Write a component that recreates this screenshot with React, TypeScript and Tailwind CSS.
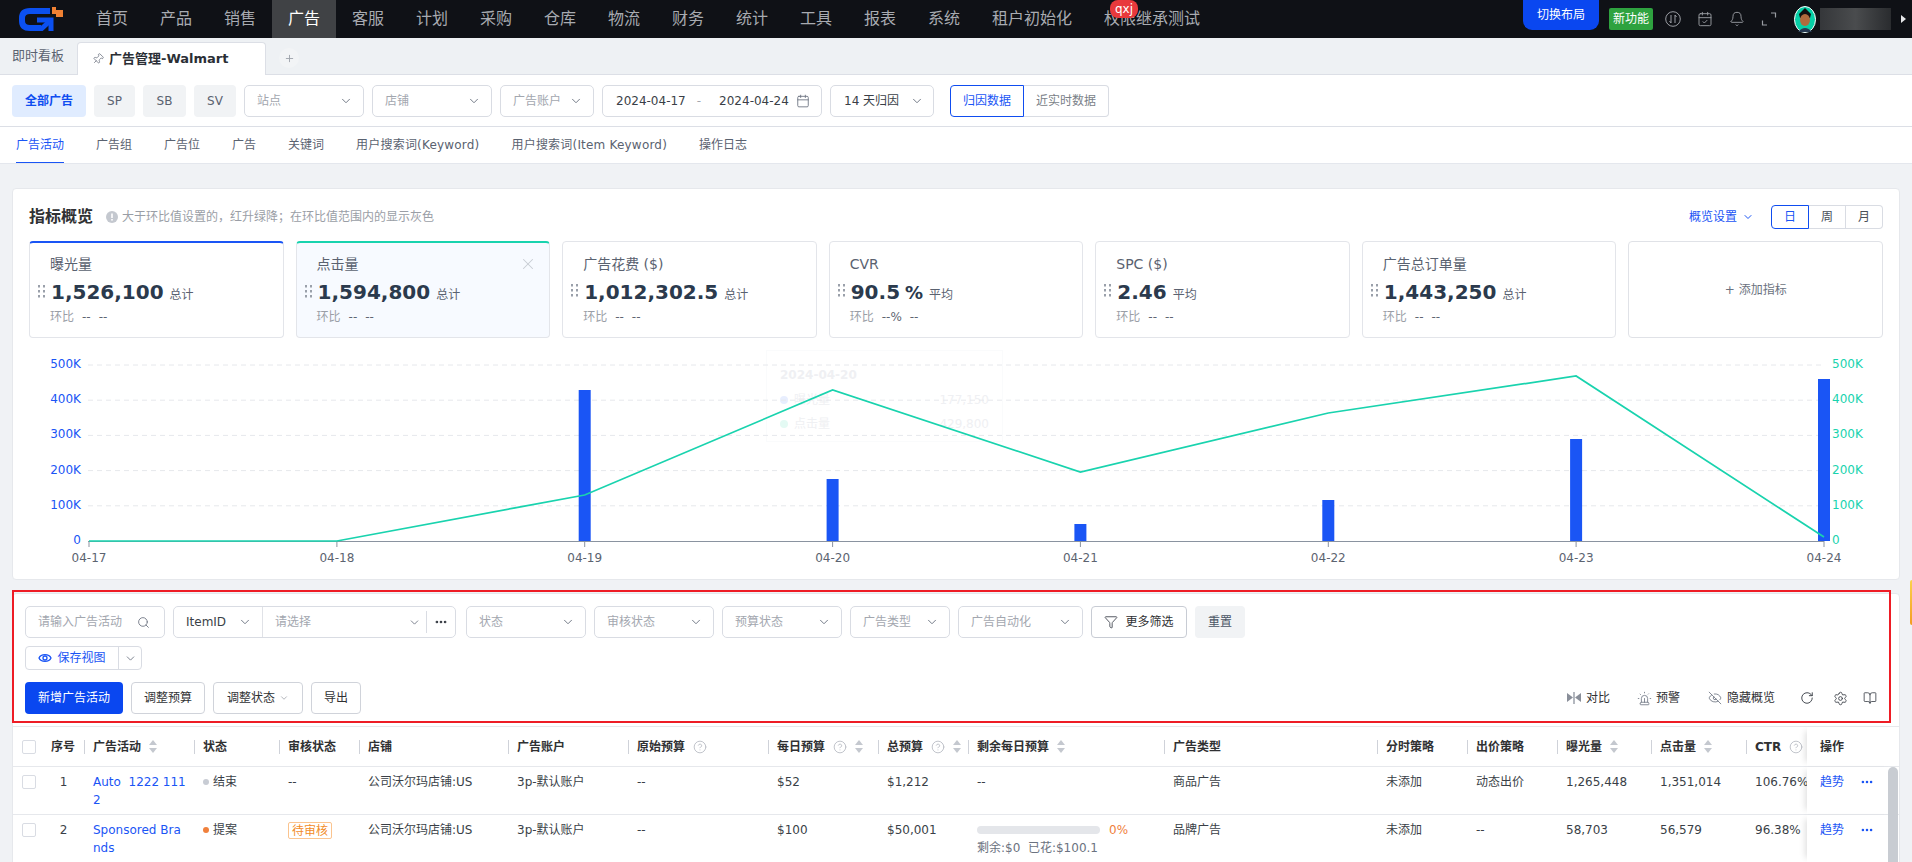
import React from "react";
import { ChevronDown, Search, Calendar, Funnel, Pin, Bell, CalendarCheck, Siren, EyeOff, RotateCw, Settings, BookOpen, CircleHelp, Plus, X, Ellipsis } from "lucide-react";

const navItems = ["首页", "产品", "销售", "广告", "客服", "计划", "采购", "仓库", "物流", "财务", "统计", "工具", "报表", "系统"];

function Logo() {
  return (
    <svg width="44" height="24" viewBox="0 0 44 24" className="block">
      <path d="M31 4 H11 Q3 4 3 11 V14 Q3 21 11 21 H22" fill="none" stroke="#0b50f0" strokeWidth="6" />
      <path d="M18 13 H32 V24" fill="none" stroke="#0b50f0" strokeWidth="5" />
      <path d="M32 13 L20 24" fill="none" stroke="#0b50f0" strokeWidth="5" />
      <path d="M33 0 H37 V3 H44 V10 H37 V7 H33 Z" fill="#f08133" />
    </svg>
  );
}

function Avatar() {
  return (
    <svg width="22" height="27" viewBox="0 0 22 27" className="block">
      <ellipse cx="11" cy="13.500" rx="10.500" ry="13" fill="#06cfa6" stroke="#fff" strokeWidth="1" />
      <path d="M5 8 L11 2 L17 8 L16 12 H6 Z" fill="#111" />
      <ellipse cx="11" cy="14" rx="5" ry="6" fill="#b06a3c" />
      <path d="M4 26 Q11 18 18 26 Z" fill="#273a52" />
    </svg>
  );
}

function Sel({ label, w }: { label: string; w: string }) {
  return (
    <div className={`flex h-8 shrink-0 items-center justify-between rounded-[5px] border border-[#d9dce3] bg-white pl-3 pr-[10px] text-xs text-[#a3a7af] ${w}`}>
      <span>{label}</span>
      <ChevronDown size={14} className="text-[#6b7280]" strokeWidth={1.6} />
    </div>
  );
}

function Sort() {
  return (
    <svg width="8" height="13" viewBox="0 0 8 13" className="ml-2 shrink-0">
      <path d="M4 0 L8 5 H0 Z" fill="#c4c8cf" />
      <path d="M0 8 H8 L4 13 Z" fill="#c4c8cf" />
    </svg>
  );
}

function Help() {
  return <CircleHelp size={14} className="ml-2 shrink-0 text-[#b8bcc4]" strokeWidth={1.5} />;
}

function Kpi({ label, value, suffix, unit, ratio = "--", accent, active }: { label: string; value: string; suffix?: string; unit: string; ratio?: string; accent?: string; active?: boolean }) {
  return (
    <div className={`relative h-[97px] rounded-[4px] border border-[#e3e5ea] pl-5 ${accent ? "pt-[11px]" : "pt-3"} ${active ? "bg-[#f7faff]" : "bg-white"} ${accent ?? ""}`}>
      <div className="text-sm leading-5 text-[#5a6270]">{label}</div>
      <svg width="7" height="13" viewBox="0 0 7 13" className="absolute left-2 top-[42px]">
        {[0, 5, 10].map((y) => (
          <g key={y} fill="#9aa0aa">
            <rect x="0" y={y} width="2" height="2.500" />
            <rect x="5" y={y} width="2" height="2.500" />
          </g>
        ))}
      </svg>
      {active && <X size={18} className="absolute right-[12px] top-[12px] text-[#c8ccd4]" strokeWidth={1.4} />}
      <div className="mt-1 flex h-7 items-baseline pl-px">
        <span className="text-xl font-bold leading-7 text-[#2b3a4d]">{value}</span>
        {suffix && <span className="ml-[5px] text-lg font-bold leading-7 text-[#2b3a4d]">{suffix}</span>}
        <span className="ml-[6px] text-xs text-[#5a6270]">{unit}</span>
      </div>
      <div className="mt-[3px] flex gap-2 text-xs leading-4">
        <span className="text-[#9a9ea6]">环比</span>
        <span className="text-[#606672]">{ratio}</span>
        <span className="text-[#606672]">--</span>
      </div>
    </div>
  );
}

function Chart() {
  const xs = [89, 336.9, 584.7, 832.6, 1080.4, 1328.3, 1576.1, 1824];
  const labels = ["04-17", "04-18", "04-19", "04-20", "04-21", "04-22", "04-23", "04-24"];
  const ticks = ["500K", "400K", "300K", "200K", "100K", "0"];
  const gridY = [365, 400.2, 435.4, 470.6, 505.8];
  const bars = [[2, 390], [3, 479], [4, 524], [5, 500], [6, 439], [7, 379]];
  const line = [541, 541, 495, 390, 472, 413, 376, 537];
  return (
    <div className="relative mt-[2px] h-[238px]">
      <div className="absolute left-[737px] top-[10px] h-[92px] w-[237px] border border-[#fafbfc] px-[13px] pt-4 text-xs text-[#eff0f3]">
        <div className="font-bold leading-4">2024-04-20</div>
        <div className="mt-[9px] flex items-center justify-between">
          <span className="flex items-center gap-[6px]"><i className="h-2 w-2 rounded-full bg-[#e8eefe]" />曝光量</span>
          <span>177,150</span>
        </div>
        <div className="mt-2 flex items-center justify-between">
          <span className="flex items-center gap-[6px]"><i className="h-2 w-2 rounded-full bg-[#e4faf4]" />点击量</span>
          <span>429,800</span>
        </div>
      </div>
      <svg viewBox="29 340 1854 238" width="1854" height="238" className="relative block" fontSize="12">
        {gridY.map((y) => (
          <line key={y} x1="88" x2="1824" y1={y} y2={y} stroke="#e6e8ec" strokeDasharray="5 4" />
        ))}
        <line x1="88" x2="1824" y1="541.500" y2="541.500" stroke="#8a93a0" />
        {xs.map((x) => (
          <line key={x} x1={x} x2={x} y1="541" y2="547" stroke="#8a93a0" />
        ))}
        {ticks.map((t, i) => (
          <g key={t}>
            <text x="81" y={368 + i * 35.2} textAnchor="end" fill="#1a55f5">{t}</text>
            <text x="1832" y={368 + i * 35.2} fill="#19d3ae">{t}</text>
          </g>
        ))}
        {labels.map((l, i) => (
          <text key={l} x={xs[i]} y="562" textAnchor="middle" fill="#5c6370">{l}</text>
        ))}
        {bars.map(([i, y]) => (
          <rect key={i} x={xs[i] - 6} y={y} width="12" height={541 - y} fill="#1a55f5" />
        ))}
        <polyline points={xs.map((x, i) => `${x},${line[i]}`).join(" ")} fill="none" stroke="#19d3ae" strokeWidth="1.700" />
      </svg>
    </div>
  );
}

function CompareIcon() {
  return (
    <svg width="14" height="12" viewBox="0 0 14 12" fill="#6b7280">
      <path d="M0 1 L6 5.500 L0 10 Z" fillOpacity="0.8" />
      <path d="M14 1 L8 5.500 L14 10 Z" fillOpacity="0.8" />
      <rect x="6.500" y="0" width="1" height="12" />
    </svg>
  );
}

function Th({ children, pad = "pl-2", last }: { children?: React.ReactNode; pad?: string; last?: boolean }) {
  return (
    <div className={`flex h-full items-center overflow-hidden whitespace-nowrap text-xs font-bold text-[#303133] ${pad}`}>
      {children}
      {!last && <span className="ml-auto h-[14px] w-px shrink-0 bg-[#cfd2d9]" />}
    </div>
  );
}

function Td({ children, pad = "pl-2" }: { children?: React.ReactNode; pad?: string }) {
  return <div className={`overflow-hidden whitespace-nowrap pt-[6px] text-xs leading-[18px] text-[#3a3f47] ${pad}`}>{children}</div>;
}

const cols = "grid grid-cols-[31px_41px_110px_85px_80px_149px_120px_140px_110px_90px_196px_213px_90px_90px_94px_95px_60px_90px]";

function Cb() {
  return <span className="mt-[2px] block h-[14px] w-[14px] rounded-[2px] border border-[#d9dce3] bg-white" />;
}

function OpCell() {
  return (
    <div className="relative flex items-start bg-white pl-[13px] pt-[6px] text-xs leading-[18px] text-[#1a55f5] shadow-[-6px_0_6px_-4px_rgba(0,0,0,0.12)]">
      <span>趋势</span>
      <Ellipsis size={14} className="ml-[16px] mt-[2px]" strokeWidth={2.4} />
    </div>
  );
}

function Row({ n, name, dot, status, audit, account = "3p-默认账户", daily, total, rest, type, bid, imp, clk, ctr }: any) {
  return (
    <div className={`${cols} h-12 border-t border-[#e6e8ec]`}>
      <Td pad="pl-[9px]"><Cb /></Td>
      <div className="pr-[2px] pt-[6px] text-center text-xs leading-[18px] text-[#3a3f47]">{n}</div>
      <Td><span className="whitespace-pre text-[#1a55f5]">{name}</span></Td>
      <Td>
        <span className="flex items-center gap-1">
          <i className={`h-[6px] w-[6px] rounded-full ${dot}`} />
          {status}
        </span>
      </Td>
      <Td>{audit}</Td>
      <Td>公司沃尔玛店铺:US</Td>
      <Td>{account}</Td>
      <Td>--</Td>
      <Td>{daily}</Td>
      <Td>{total}</Td>
      <Td>{rest}</Td>
      <Td>{type}</Td>
      <Td>未添加</Td>
      <Td>{bid}</Td>
      <Td>{imp}</Td>
      <Td>{clk}</Td>
      <Td>{ctr}</Td>
      <OpCell />
    </div>
  );
}

export default function App() {
  return (
    <div className="relative h-[862px] w-[1912px] overflow-hidden bg-[#f0f2f5] text-xs text-[#303133] [font-family:'DejaVu_Sans','Noto_Sans_CJK_SC',sans-serif]">
      {/* top nav */}
      <header className="flex h-[38px] items-center bg-[#0f1116] text-base text-[#a8abb1]">
        <div className="flex h-full w-20 shrink-0 items-center pl-[19px]"><Logo /></div>
        {navItems.map((t) => (
          <div key={t} className={`flex h-full w-16 shrink-0 items-center justify-center ${t === "广告" ? "bg-[#404245] text-white" : ""}`}>{t}</div>
        ))}
        <div className="shrink-0 px-4">租户初始化</div>
        <div className="relative shrink-0 px-4">
          权限继承测试
          <span className="absolute -top-[7px] left-[22px] flex h-[18px] w-[28px] items-center justify-center rounded-[8px] bg-[#e8393c] text-xs leading-none text-white">qxj</span>
        </div>
        <div className="ml-auto flex h-full items-center pr-[6px]">
          <div className="flex h-[30px] w-[76px] items-center justify-center self-start rounded-b-[9px] bg-[#0a47f0] text-xs text-white">切换布局</div>
          <div className="ml-[10px] flex h-[22px] w-11 items-center justify-center rounded-[2px] bg-[#2ea23f] text-xs text-white">新功能</div>
          <svg width="16" height="16" viewBox="0 0 16 16" fill="none" stroke="#9a9da3" className="ml-3">
            <circle cx="8" cy="8" r="7.300" />
            <path d="M6 4 V12 M6 12 L4.500 10 M10 12 V4 M10 4 L11.500 6" />
          </svg>
          <CalendarCheck size={16} className="ml-4 text-[#9a9da3]" strokeWidth={1.4} />
          <Bell size={16} className="ml-4 text-[#9a9da3]" strokeWidth={1.4} />
          <svg width="16" height="16" viewBox="0 0 16 16" fill="none" stroke="#9a9da3" strokeWidth="1.200" className="ml-4">
            <path d="M10 2 H14.500 V6.500 M1.500 9.500 V14 H6" />
          </svg>
          <div className="ml-[17px]"><Avatar /></div>
          <div className="ml-1 h-[22px] w-[71px] bg-gradient-to-r from-[#35373a] via-[#4a4c4e] to-[#2a2c2f]" />
          <svg width="5" height="8" viewBox="0 0 5 8" className="ml-[10px]"><path d="M0 0 L5 4 L0 8 Z" fill="#e6e7e9" /></svg>
        </div>
      </header>

      {/* page tabs */}
      <div className="flex h-[37px] items-end border-b border-[#dcdfe6] bg-[#eef1f4]">
        <div className="flex h-full w-[77px] shrink-0 items-center pl-3 text-[13px] text-[#5a6270]">即时看板</div>
        <div className="-mb-px flex h-[33px] w-[189px] shrink-0 items-center gap-[5px] rounded-t-[4px] border border-b-0 border-[#dcdfe6] bg-white pl-[14px] text-[13px] font-bold text-[#2b2f36]">
          <Pin size={12} className="rotate-45 text-[#6b7280]" strokeWidth={1.5} />
          广告管理-Walmart
        </div>
        <div className="mb-[6px] ml-[13px] flex h-5 w-5 items-center justify-center rounded-full bg-[#f2f4f6] text-[#9ea3ab]"><Plus size={11} /></div>
      </div>

      {/* filter bar */}
      <div className="flex h-[52px] items-start gap-2 border-b border-[#dcdfe6] bg-white px-3 pt-[10px]">
        <div className="flex h-8 w-[74px] items-center justify-center rounded-[4px] bg-[#e0ecff] font-bold text-[#0f4df0]">全部广告</div>
        <div className="flex h-8 w-[41px] items-center justify-center rounded-[4px] bg-[#f1f3f5] text-[#5a6270]">SP</div>
        <div className="flex h-8 w-[43px] items-center justify-center rounded-[4px] bg-[#f1f3f5] text-[#5a6270]">SB</div>
        <div className="flex h-8 w-[42px] items-center justify-center rounded-[4px] bg-[#f1f3f5] text-[#5a6270]">SV</div>
        <Sel label="站点" w="w-[120px]" />
        <Sel label="店铺" w="w-[120px]" />
        <Sel label="广告账户" w="w-[94px]" />
        <div className="flex h-8 w-[220px] shrink-0 items-center rounded-[5px] border border-[#d9dce3] pl-[13px] text-[#3a3f47]">
          <span>2024-04-17</span>
          <span className="ml-[11px] text-[#a3a7af]">-</span>
          <span className="ml-[18px]">2024-04-24</span>
          <Calendar size={14} className="ml-[7px] text-[#6b7280]" strokeWidth={1.5} />
        </div>
        <div className="flex h-8 w-[104px] shrink-0 items-center justify-between rounded-[5px] border border-[#d9dce3] pl-[13px] pr-[9px] text-[#3a3f47]">
          <span>14 天归因</span>
          <ChevronDown size={14} className="text-[#6b7280]" strokeWidth={1.6} />
        </div>
        <div className="ml-2 flex h-8">
          <div className="flex w-[74px] items-center justify-center rounded-l-[4px] border border-[#0f4df0] text-[#1a55f5]">归因数据</div>
          <div className="flex w-[85px] items-center justify-center rounded-r-[4px] border border-l-0 border-[#d9dce3] text-[#7a7f88]">近实时数据</div>
        </div>
      </div>

      {/* sub tabs */}
      <div className="flex h-[37px] items-stretch gap-8 border-b border-[#e4e7ed] bg-white pl-4 text-[#5a6270]">
        <div className="flex items-center border-b border-[#1a55f5] text-[#1a55f5]">广告活动</div>
        <div className="flex items-center">广告组</div>
        <div className="flex items-center">广告位</div>
        <div className="flex items-center">广告</div>
        <div className="flex items-center">关键词</div>
        <div className="flex items-center tracking-[0.2px]">用户搜索词(Keyword)</div>
        <div className="flex items-center tracking-[0.2px]">用户搜索词(Item Keyword)</div>
        <div className="flex items-center">操作日志</div>
      </div>

      {/* overview */}
      <main className="px-3 pt-6">
        <section className="h-[392px] rounded-[4px] border border-[#e6e8ec] bg-white px-4 pt-4">
          <div className="flex h-6 items-center">
            <h2 className="text-base font-bold text-[#303133]">指标概览</h2>
            <svg width="12" height="12" viewBox="0 0 12 12" className="ml-[13px]">
              <circle cx="6" cy="6" r="6" fill="#c4c8cf" />
              <rect x="5.200" y="2.500" width="1.600" height="4.500" fill="#fff" />
              <rect x="5.200" y="8" width="1.600" height="1.600" fill="#fff" />
            </svg>
            <span className="ml-1 text-xs text-[#9a9ea6]">大于环比值设置的，红升绿降；在环比值范围内的显示灰色</span>
            <span className="ml-auto text-xs text-[#1a55f5]">概览设置</span>
            <ChevronDown size={12} className="ml-[5px] text-[#1a55f5]" strokeWidth={2} />
            <div className="ml-[17px] flex h-6 w-[112px] text-xs text-[#4a4f58]">
              <div className="flex w-[38px] items-center justify-center rounded-l-[4px] border border-[#0f4df0] text-[#1a55f5]">日</div>
              <div className="flex w-[37px] items-center justify-center border-y border-r border-[#d9dce3]">周</div>
              <div className="flex w-[37px] items-center justify-center rounded-r-[4px] border-y border-r border-[#d9dce3]">月</div>
            </div>
          </div>
          <div className="mt-3 grid grid-cols-7 gap-3">
            <Kpi label="曝光量" value="1,526,100" unit="总计" accent="border-t-2 border-t-[#1a55f5]" />
            <Kpi label="点击量" value="1,594,800" unit="总计" active accent="border-t-2 border-t-[#19d3ae]" />
            <Kpi label="广告花费 ($)" value="1,012,302.5" unit="总计" />
            <Kpi label="CVR" value="90.5" suffix="%" unit="平均" ratio="--%" />
            <Kpi label="SPC ($)" value="2.46" unit="平均" />
            <Kpi label="广告总订单量" value="1,443,250" unit="总计" />
            <div className="flex h-[97px] items-center justify-center rounded-[4px] border border-[#e0e2e7] text-xs text-[#6b7280]">+ 添加指标</div>
          </div>
          <Chart />
        </section>

        {/* campaign table card */}
        <section className="relative mt-[13px] h-[300px] overflow-hidden rounded-t-[4px] border border-[#e6e8ec] bg-white pt-3">
          <div className="flex gap-2 pl-3">
            <div className="flex h-8 w-[140px] items-center justify-between rounded-[5px] border border-[#d9dce3] pl-[12px] pr-[14px] text-[#a3a7af]">
              <span>请输入广告活动</span>
              <Search size={13} className="text-[#6b7280]" strokeWidth={1.6} />
            </div>
            <div className="flex h-8 w-[283px] items-center rounded-[5px] border border-[#d9dce3]">
              <div className="flex h-full w-[89px] items-center justify-between border-r border-[#e0e2e7] pl-[12px] pr-[10px] text-[#3a3f47]">
                <span>ItemID</span>
                <ChevronDown size={14} className="text-[#6b7280]" strokeWidth={1.6} />
              </div>
              <span className="ml-3 text-[#a3a7af]">请选择</span>
              <ChevronDown size={13} className="ml-auto text-[#6b7280]" strokeWidth={1.6} />
              <span className="ml-[5px] h-[22px] w-px bg-[#d9dce3]" />
              <Ellipsis size={14} className="mx-[7px] text-[#3a3f47]" strokeWidth={2.6} />
            </div>
            <div className="ml-[2px] flex gap-2">
              <Sel label="状态" w="w-[120px]" />
              <Sel label="审核状态" w="w-[120px]" />
              <Sel label="预算状态" w="w-[120px]" />
              <Sel label="广告类型" w="w-[100px]" />
              <Sel label="广告自动化" w="w-[125px]" />
              <div className="flex h-8 w-[96px] items-center justify-center gap-[7px] rounded-[4px] border border-[#c8ccd4] text-[#303133]">
                <Funnel size={14} className="text-[#4a4f58]" strokeWidth={1.6} />
                更多筛选
              </div>
              <div className="flex h-8 w-[50px] items-center justify-center rounded-[4px] bg-[#f1f3f5] text-[#4a5564]">重置</div>
            </div>
          </div>
          <div className="ml-3 mt-2 flex h-6 w-[117px] items-center rounded-[4px] border border-[#d9dce3] text-[#1a55f5]">
            <div className="flex h-full w-[93px] items-center justify-center gap-[5px] border-r border-[#d9dce3]">
              <svg width="14" height="12" viewBox="0 0 14 12" fill="none" stroke="#1a55f5" strokeWidth="1.300">
                <path d="M1 6 C3 1.500 11 1.500 13 6 C11 10.500 3 10.500 1 6 Z" />
                <circle cx="7" cy="6" r="2" />
              </svg>
              保存视图
            </div>
            <ChevronDown size={13} className="ml-[5px] text-[#6b7280]" strokeWidth={1.6} />
          </div>
          <div className="mt-3 flex h-8 items-center gap-2 pl-3 pr-[22px]">
            <div className="flex h-8 w-[98px] items-center justify-center rounded-[4px] bg-[#0a47f0] text-white">新增广告活动</div>
            <div className="flex h-8 w-[74px] items-center justify-center rounded-[4px] border border-[#d0d3da]">调整预算</div>
            <div className="flex h-8 w-[90px] items-center justify-center gap-1 rounded-[4px] border border-[#d0d3da]">
              调整状态
              <ChevronDown size={10} className="text-[#a3a7af]" />
            </div>
            <div className="flex h-8 w-[50px] items-center justify-center rounded-[4px] border border-[#d0d3da]">导出</div>
            <div className="ml-auto flex items-center gap-[5px]"><CompareIcon />对比</div>
            <div className="ml-[19px] flex items-center gap-[4px]"><Siren size={15} className="text-[#6b7280]" strokeWidth={1.3} />预警</div>
            <div className="ml-[20px] flex items-center gap-[5px]"><EyeOff size={14} className="text-[#6b7280]" strokeWidth={1.4} />隐藏概览</div>
            <RotateCw size={14} className="ml-[17px] text-[#3a3f47]" strokeWidth={1.6} />
            <Settings size={15} className="ml-[11px] text-[#3a3f47]" strokeWidth={1.4} />
            <BookOpen size={14} className="ml-[7px] text-[#3a3f47]" strokeWidth={1.4} />
          </div>

          <div className="mt-3 border-t border-[#e6e8ec]">
            <div className={`${cols} h-[39px]`}>
              <div className="flex h-full items-center pl-[9px]"><span className="block h-[14px] w-[14px] rounded-[2px] border border-[#d9dce3]" /></div>
              <Th pad="pl-[7px]">序号</Th>
              <Th>广告活动<Sort /></Th>
              <Th>状态</Th>
              <Th>审核状态</Th>
              <Th>店铺</Th>
              <Th>广告账户</Th>
              <Th>原始预算<Help /></Th>
              <Th>每日预算<Help /><Sort /></Th>
              <Th>总预算<Help /><Sort /></Th>
              <Th>剩余每日预算<Sort /></Th>
              <Th>广告类型</Th>
              <Th>分时策略</Th>
              <Th>出价策略</Th>
              <Th>曝光量<Sort /></Th>
              <Th>点击量<Sort /></Th>
              <Th last>CTR<Help /></Th>
              <div className="relative flex items-center bg-white pl-[13px] text-xs font-bold shadow-[-6px_0_6px_-4px_rgba(0,0,0,0.12)]">操作</div>
            </div>
            <Row
              n={1}
              name={<>Auto  1222 111<br />2</>}
              dot="bg-[#c8ccd4]"
              status="结束"
              audit="--"
              daily="$52"
              total="$1,212"
              rest="--"
              type="商品广告"
              bid="动态出价"
              imp="1,265,448"
              clk="1,351,014"
              ctr="106.76%"
            />
            <Row
              n={2}
              name={<>Sponsored Bra<br />nds</>}
              dot="bg-[#f0803c]"
              status="提案"
              audit={<span className="mt-px flex h-[17px] w-11 items-center justify-center rounded-[2px] border border-[#fbc48f] text-[#f28c28]">待审核</span>}
              daily="$100"
              total="$50,001"
              rest={
                <div>
                  <div className="flex items-center">
                    <span className="h-2 w-[123px] rounded-full bg-[#e4e6ea]" />
                    <span className="ml-[9px] text-[#f0803c]">0%</span>
                  </div>
                  <div className="text-[#6b7280]">剩余:$0&nbsp;&nbsp;已花:$100.1</div>
                </div>
              }
              type="品牌广告"
              bid="--"
              imp="58,703"
              clk="56,579"
              ctr="96.38%"
            />
          </div>
          <div className="absolute bottom-0 right-px top-[173px] w-[10px] rounded-t-full bg-[#c8ccd2]" />
        </section>
      </main>

      {/* annotation outline and side handle */}
      <div className="pointer-events-none absolute left-3 top-[590px] h-[133px] w-[1879px] border-2 border-[#ee1c25]" />
      <div className="absolute right-0 top-[580px] h-[45px] w-[2px] rounded-l-sm bg-gradient-to-b from-[#fbd24a] to-[#f39c1f]" />
    </div>
  );
}
